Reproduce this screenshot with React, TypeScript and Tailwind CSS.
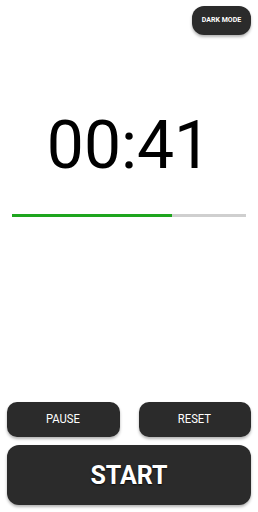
import React from "react";

export default function App() {
  const progress = 41 / 60;
  return (
    <div
      className="w-full h-[512px] bg-white flex flex-col"
      style={{ fontFamily: "Roboto, 'Noto Sans', sans-serif" }}
    >
      <div className="flex justify-end pt-[6px] pr-[7px]">
        <button className="w-[59px] h-[29px] rounded-[12px] bg-[#2b2b2b] text-white text-[7px] font-bold leading-none shadow-[0_2px_3px_rgba(0,0,0,0.3)]">
          DARK MODE
        </button>
      </div>
      <div className="mt-[78px] text-center text-black text-[66px] leading-none h-[66px]">
        00:41
      </div>
      <div className="mt-[35px] mx-[12px] h-[3px] bg-[#cfcfcf]">
        <div className="h-full bg-[#1ea51e]" style={{ width: `${progress * 100}%` }} />
      </div>
      <div className="mt-auto px-[7px] pb-[7px] flex flex-col gap-[8px]">
        <div className="grid grid-cols-2 gap-[19px]">
          <button className="h-[35px] rounded-[10px] bg-[#2b2b2b] text-white text-[12.5px] leading-none shadow-[0_2px_3px_rgba(0,0,0,0.3)]">
            <span className="inline-block scale-x-90">PAUSE</span>
          </button>
          <button className="h-[35px] rounded-[10px] bg-[#2b2b2b] text-white text-[12.5px] leading-none shadow-[0_2px_3px_rgba(0,0,0,0.3)]">
            <span className="inline-block scale-x-90">RESET</span>
          </button>
        </div>
        <button className="h-[60px] rounded-[12px] bg-[#2b2b2b] text-white text-[25px] font-bold leading-none shadow-[0_2px_3px_rgba(0,0,0,0.3)] [text-shadow:0_1px_2px_rgba(0,0,0,0.8)]">
          START
        </button>
      </div>
    </div>
  );
}
